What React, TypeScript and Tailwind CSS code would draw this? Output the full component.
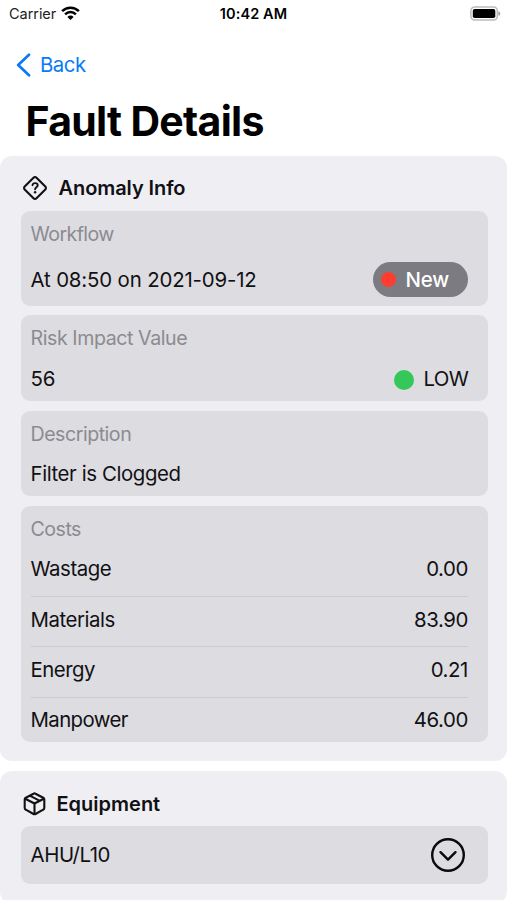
import type { ReactNode } from 'react';
import { clsx } from 'clsx';

const costs = [
  { label: 'Wastage', value: '0.00', labelClass: 'tracking-[-0.45px]' },
  { label: 'Materials', value: '83.90', labelClass: 'tracking-[-0.45px]' },
  { label: 'Energy', value: '0.21', labelClass: 'tracking-[-0.5px]' },
  { label: 'Manpower', value: '46.00', labelClass: 'tracking-[-0.6px]' },
];

function WifiIcon() {
  return (
    <svg width="19" height="15" viewBox="0 0 19 15" className="shrink-0" fill="none" stroke="#000" strokeWidth="2.5">
      <path d="M1.1 5.1a12 12 0 0 1 16.8 0" />
      <path d="M4.1 8.3a7.7 7.7 0 0 1 10.8 0" />
      <path d="M6.4 10.9a4.3 4.3 0 0 1 6.2 0L9.5 14z" fill="#000" stroke="none" />
    </svg>
  );
}

function BatteryIcon() {
  return (
    <svg width="31" height="15" viewBox="0 0 31 15" className="shrink-0">
      <rect x="0.9" y="0.9" width="26.4" height="13.2" rx="3.8" fill="#fff" stroke="#bcbcbc" strokeWidth="1.5" />
      <rect x="2.8" y="2.9" width="22.5" height="9.2" rx="1.8" fill="#000" />
      <path d="M28.4 5.2c2.6.9 2.6 3.7 0 4.6z" fill="#a3a3a3" />
    </svg>
  );
}

function QuestionDiamondIcon() {
  return (
    <svg width="24" height="24" viewBox="0 0 24 24" className="shrink-0" fill="none" stroke="#111" strokeWidth="2.1" strokeLinecap="round" strokeLinejoin="round">
      <path d="M10.5 1.7a2.1 2.1 0 0 1 3 0l8.8 8.8a2.1 2.1 0 0 1 0 3l-8.8 8.8a2.1 2.1 0 0 1-3 0l-8.8-8.8a2.1 2.1 0 0 1 0-3z" />
      <path d="M9.5 9.2c.2-1.4 1.2-2.1 2.6-2.1 1.5 0 2.6.8 2.6 2.1 0 2-2.6 1.9-2.6 4" strokeWidth="1.9" />
      <circle cx="12.1" cy="16.2" r="1.2" fill="#111" stroke="none" />
    </svg>
  );
}

function BoxIcon() {
  return (
    <svg width="23" height="24" viewBox="0 0 23 24" className="shrink-0" fill="none" stroke="#111" strokeWidth="2.1" strokeLinecap="round" strokeLinejoin="round">
      <path d="M10.5 1.7a2 2 0 0 1 2 0l7.7 4a2 2 0 0 1 1.1 1.8v8.4a2 2 0 0 1-1.1 1.8l-7.7 4.3a2 2 0 0 1-2 0l-7.7-4.3a2 2 0 0 1-1.1-1.8V7.5a2 2 0 0 1 1.1-1.8z" />
      <path d="M2.200 6.800l9.300 4.700 9.300-4.700M11.500 11.500v10.300" />
      <path d="M7.200 3.900l9.200 4.800" strokeWidth="1.900" />
    </svg>
  );
}

function ChevronCircleIcon() {
  return (
    <svg width="34" height="34" viewBox="0 0 34 34" className="shrink-0" fill="none" stroke="#0a0a0a" strokeWidth="2.4" strokeLinecap="round" strokeLinejoin="round">
      <circle cx="17" cy="17" r="15.8" />
      <path d="M9.5 14.2l7.5 7.5 7.5-7.500" />
    </svg>
  );
}

function Section({ icon, title, titleClass, children }: { icon: ReactNode; title: string; titleClass: string; children: ReactNode }) {
  return (
    <section className="rounded-[12px] bg-[#efeef3] pr-[19.5px] pb-[19.5px] pl-[20.5px]">
      <div className="flex h-[55px] items-center pt-[10px] pl-[2px]">
        {icon}
        <h2 className={clsx('pt-px text-[20px] leading-[25px] font-semibold text-[#111113]', titleClass)}>{title}</h2>
      </div>
      <div className="flex flex-col gap-[9.65px]">{children}</div>
    </section>
  );
}

function Panel({ label, labelClass, children }: { label: string; labelClass: string; children: ReactNode }) {
  return (
    <div className="rounded-[9px] bg-[#dddce1] px-[10px] pt-[11px] pb-[9px]">
      <div className={clsx('mb-[16px] text-[19.6px] leading-[24.75px] text-[#8b8b90]', labelClass)}>{label}</div>
      {children}
    </div>
  );
}

export default function App() {
  return (
    <div className="h-[900px] w-[507px] overflow-hidden bg-white font-['Inter',sans-serif] text-[20.4px] leading-[24.75px] text-[#111113]">
      {/* Status bar */}
      <div className="flex h-[27px] items-center justify-between pr-[6px] pl-[9px] text-[14.5px]">
        <div className="flex w-[158px] items-center gap-[5px] text-[#222]">
          <span className="pt-px tracking-[-0.05px]">Carrier</span>
          <WifiIcon />
        </div>
        <div className="pt-px font-semibold tracking-[0.1px] text-black">10:42 AM</div>
        <div className="flex w-[161px] justify-end">
          <BatteryIcon />
        </div>
      </div>

      {/* Nav */}
      <button className="mt-[25px] flex h-[26px] items-center gap-[9px] pl-[16px] text-[#0a7bf5]">
        <svg width="15" height="24" viewBox="0 0 15 24" fill="none" stroke="currentColor" strokeWidth="2.7" strokeLinecap="round" strokeLinejoin="round">
          <path d="M13 1.8L2.2 12 13 22.2" />
        </svg>
        <span className="pt-px tracking-[-0.5px]">Back</span>
      </button>
      <h1 className="mt-[18px] h-[59.5px] pl-[25.5px] text-[41px] leading-[50px] font-bold tracking-[-0.7px] text-black">Fault Details</h1>

      <div className="flex flex-col gap-[10px]">
        <Section icon={<QuestionDiamondIcon />} title="Anomaly Info" titleClass="ml-[12px] tracking-[-0.08px]">
          <Panel label="Workflow" labelClass="tracking-[-0.58px]">
            <div className="flex h-[34.5px] items-center justify-between pr-[9.5px]">
              <span className="pt-px tracking-[-0.15px]">At 08:50 on 2021-09-12</span>
              <div className="flex h-[34.5px] w-[95px] items-center rounded-full bg-[#7c7b81] pl-[7.5px] text-white">
                <span className="mr-[10px] h-[15px] w-[15px] rounded-full bg-[#ff3c30]" />
                <span className="pt-px font-medium tracking-[-0.2px]">New</span>
              </div>
            </div>
          </Panel>

          <Panel label="Risk Impact Value" labelClass="tracking-[-0.43px]">
            <div className="flex items-center justify-between pr-[9.5px]">
              <span className="tracking-[-0.2px]">56</span>
              <div className="flex items-center gap-[10px]">
                <span className="h-[20px] w-[20px] rounded-full bg-[#34c759]" />
                <span className="tracking-[-0.75px]">LOW</span>
              </div>
            </div>
          </Panel>

          <Panel label="Description" labelClass="tracking-[-0.48px]">
            <div className="tracking-[-0.4px]">Filter is Clogged</div>
          </Panel>

          <Panel label="Costs" labelClass="tracking-[-0.5px]">
            {costs.map((cost, i) => (
              <div key={cost.label}>
                <div className="mr-[9.5px] flex items-center justify-between">
                  <span className={cost.labelClass}>{cost.label}</span>
                  <span className="tracking-[-0.4px]">{cost.value}</span>
                </div>
                {i < costs.length - 1 && <div className="mt-[14px] mr-[9.5px] mb-[10.45px] h-px bg-[#cccbd0]" />}
              </div>
            ))}
          </Panel>
        </Section>

        <Section icon={<BoxIcon />} title="Equipment" titleClass="ml-[11px]">
          <div className="-mt-[0.5px] flex h-[58.5px] items-center justify-between rounded-[9px] bg-[#dddce1] pr-[22.5px] pl-[10px]">
            <span className="tracking-[-0.4px]">AHU/L10</span>
            <ChevronCircleIcon />
          </div>
        </Section>
      </div>
    </div>
  );
}
